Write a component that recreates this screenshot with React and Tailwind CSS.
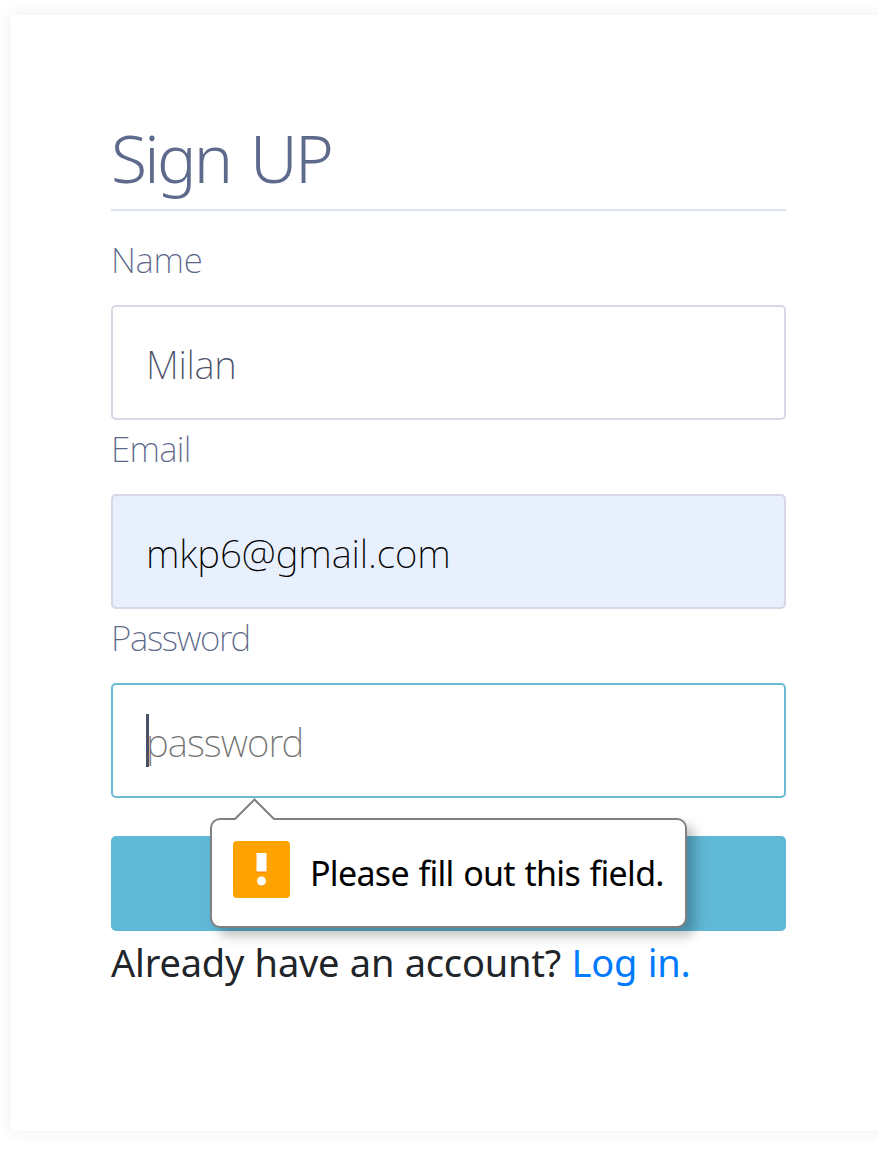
const field =
  "block h-[115px] w-full rounded-[5px] border-2 pl-[33px] pt-[3px] text-[38.5px] font-extralight outline-none";

function Field({ label, first, tracking, children }) {
  return (
    <div>
      <label
        className={
          (first ? "h-[94px] leading-[98px] " : "h-[74px] leading-[58px] ") +
          "block text-[35px] font-extralight text-[#5c6788] " +
          tracking
        }
      >
        {label}
      </label>
      {children}
    </div>
  );
}

function ValidationBubble() {
  return (
    <div className="absolute left-[99px] top-[-18px] flex h-[110px] w-[477px] items-center rounded-[10px] border-2 border-[#808080] bg-white pl-[21px] shadow-[8px_8px_12px_rgba(0,0,0,0.25)]">
      <svg className="absolute left-[20px] top-[-23px]" width="46" height="24" viewBox="0 0 46 24">
        <path d="M3 24L3 22L22.5 2.5L42 22L42 24Z" fill="#fff" />
        <path d="M2 22H3L22.5 2.5L42 22H43" fill="none" stroke="#808080" strokeWidth="2" />
      </svg>
      <svg className="mt-[-7px] shrink-0" width="57" height="57" viewBox="0 0 57 57">
        <rect width="57" height="57" rx="4" fill="#ffa300" />
        <rect x="23.5" y="13" width="10" height="19" fill="#f98c00" />
        <circle cx="28.5" cy="40.7" r="4.5" fill="#f98c00" />
        <rect x="23.5" y="12" width="10" height="18.5" fill="#fff" />
        <circle cx="28.5" cy="40" r="4.5" fill="#fff" />
      </svg>
      <span className="ml-[20px] whitespace-nowrap text-[34px] leading-none tracking-[-0.7px] [word-spacing:1.4px] text-black">
        Please fill out this field.
      </span>
    </div>
  );
}

export default function App() {
  return (
    <div className="h-[1151px] w-full overflow-hidden bg-white pl-[11px] pt-[15px] font-['Noto_Sans','Open_Sans',sans-serif]">
      <div className="h-[1116px] w-[900px] bg-white pl-[100px] pt-[100px] shadow-[0_0_16px_rgba(70,70,130,0.09)]">
        <form className="w-[675px]">
          <h1 className="h-[96px] border-b-2 border-[#dce3ee] text-[66px] leading-[85px] font-light tracking-[-2.7px] [word-spacing:5px] text-[#5d6a8c]">
            Sign UP
          </h1>
          <Field label="Name" tracking="tracking-[-0.3px]" first>
            <input className={field + " border-[#d5d8e5] tracking-[-0.3px] text-[#4b5069]"} defaultValue="Milan" />
          </Field>
          <Field label="Email" tracking="tracking-[-0.7px]">
            <input className={field + " border-[#d5d8e5] bg-[#e8f0fe] tracking-[-0.1px] text-black"} defaultValue="mkp6@gmail.com" />
          </Field>
          <Field label="Password" tracking="tracking-[-1.3px]">
            <div className="relative">
              <input className={field + " border-[#68bad5] tracking-[-0.9px] placeholder:text-[#757575]"} placeholder="password" />
              <span className="absolute left-[35px] top-[31px] h-[53px] w-[3px] bg-[#4b5069]" />
            </div>
          </Field>
          <div className="relative mt-[38px]">
            <button type="button" aria-label="Sign up" className="block h-[95px] w-full rounded-[5px] bg-[#5fb8d6]" />
            <ValidationBubble />
          </div>
          <p className="whitespace-nowrap text-[38px] leading-[63px] tracking-[-0.2px] [word-spacing:0.8px] text-[#212529]">
            Already have an account? <a className="text-[#007bff]">Log in.</a>
          </p>
        </form>
      </div>
    </div>
  );
}
